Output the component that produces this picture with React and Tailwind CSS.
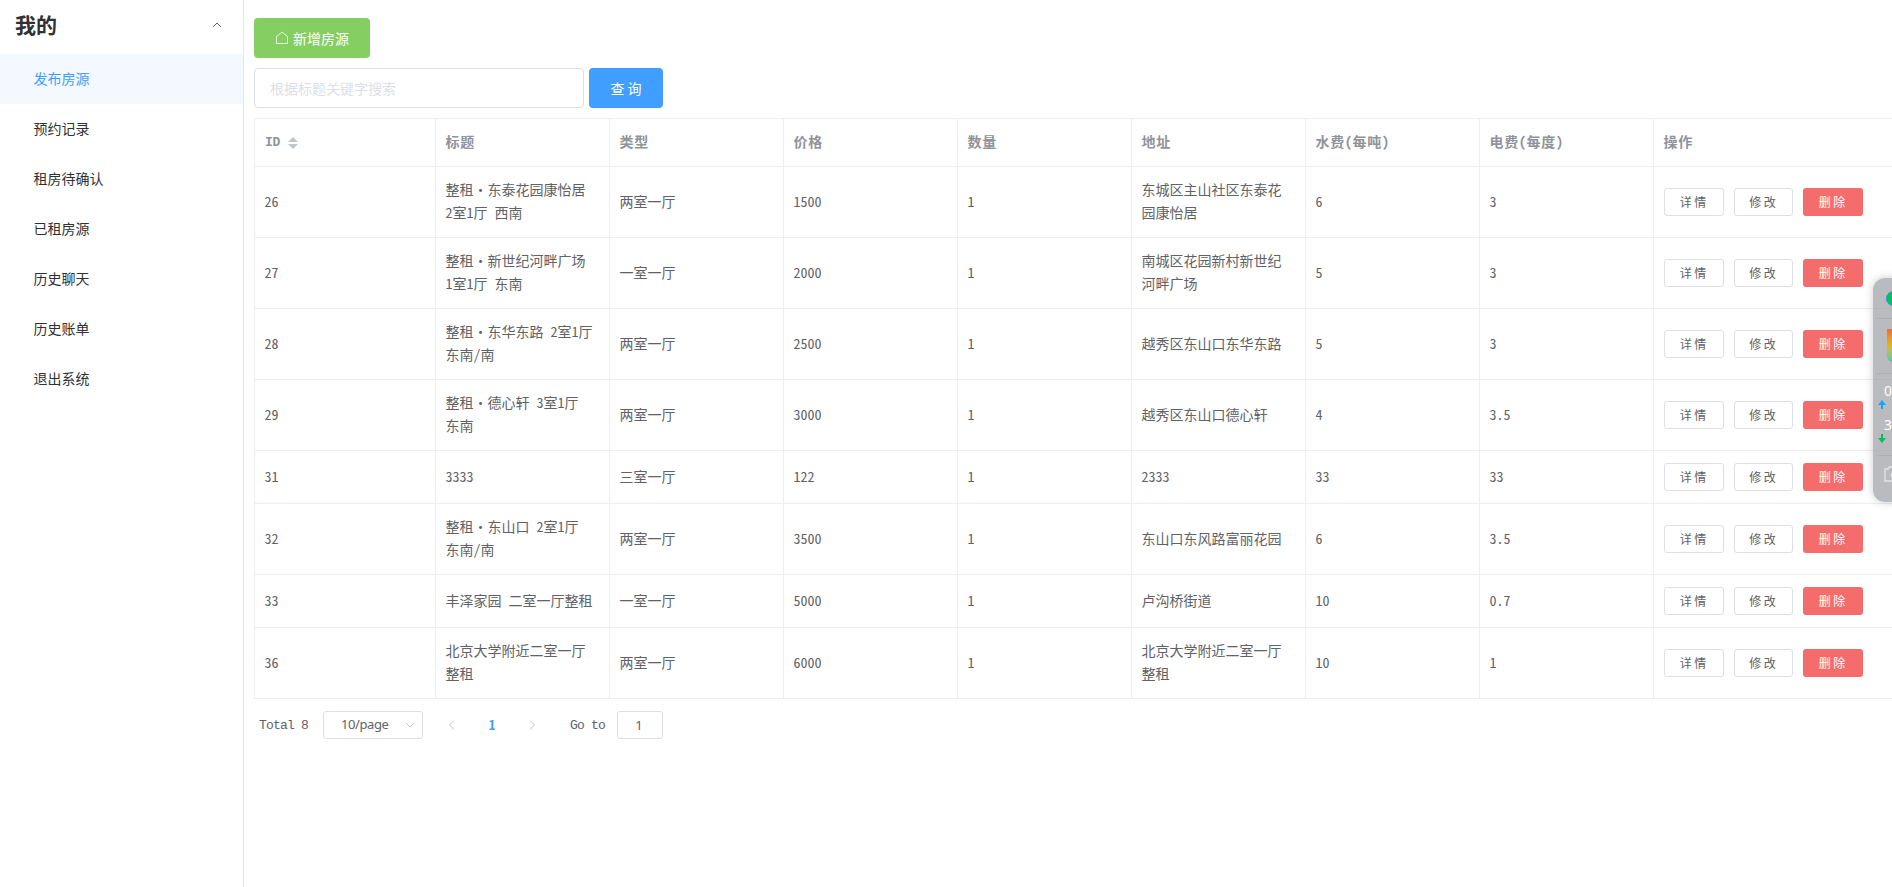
import React, { useState } from "react";

const menuItems = ["发布房源", "预约记录", "租房待确认", "已租房源", "历史聊天", "历史账单", "退出系统"];

const columns = ["标题", "类型", "价格", "数量", "地址", "水费(每吨)", "电费(每度)", "操作"];

const houses = [
  { id: 26, title: "整租·东泰花园康怡居 2室1厅 西南", type: "两室一厅", price: 1500, count: 1, address: "东城区主山社区东泰花园康怡居", water: 6, power: 3 },
  { id: 27, title: "整租·新世纪河畔广场 1室1厅 东南", type: "一室一厅", price: 2000, count: 1, address: "南城区花园新村新世纪河畔广场", water: 5, power: 3 },
  { id: 28, title: "整租·东华东路 2室1厅 东南/南", type: "两室一厅", price: 2500, count: 1, address: "越秀区东山口东华东路", water: 5, power: 3 },
  { id: 29, title: "整租·德心轩 3室1厅 东南", type: "两室一厅", price: 3000, count: 1, address: "越秀区东山口德心轩", water: 4, power: 3.5 },
  { id: 31, title: "3333", type: "三室一厅", price: 122, count: 1, address: "2333", water: 33, power: 33 },
  { id: 32, title: "整租·东山口 2室1厅 东南/南", type: "两室一厅", price: 3500, count: 1, address: "东山口东风路富丽花园", water: 6, power: 3.5 },
  { id: 33, title: "丰泽家园 二室一厅整租", type: "一室一厅", price: 5000, count: 1, address: "卢沟桥街道", water: 10, power: 0.7 },
  { id: 36, title: "北京大学附近二室一厅整租", type: "两室一厅", price: 6000, count: 1, address: "北京大学附近二室一厅整租", water: 10, power: 1 },
];

const Chevron = ({ className, d }) => (
  <svg viewBox="0 0 12 12" className={className} fill="none" stroke="currentColor">
    <path d={d} />
  </svg>
);

const Sidebar = () => {
  const [active, setActive] = useState(0);

  return (
    <aside className="w-[244px] shrink-0 border-r border-[#e6e6e6]">
      <div className="flex h-[54px] items-center justify-between pl-[15px] pr-5 pb-[5px] text-[#303133]">
        <h2 className="text-[21px] font-bold">我的</h2>
        <Chevron className="h-3 w-3 text-[#606266]" d="M2 8l4-4 4 4" />
      </div>
      <ul>
        {menuItems.map((item, index) => (
          <li
            key={item}
            onClick={() => setActive(index)}
            className={`h-[50px] cursor-pointer pl-[33.5px] text-sm leading-[48px] ${
              active === index ? "bg-[#f3f9ff] text-[#409eff]" : "text-[#303133]"
            }`}
          >
            {item}
          </li>
        ))}
      </ul>
    </aside>
  );
};

const HouseTable = () => (
  <table className="w-[1660px] table-fixed border-separate border-spacing-0 border-l border-t border-[#ebeef5] text-sm leading-[23px] text-[#606266]">
    <colgroup>
      <col className="w-[181px]" />
      {columns.slice(0, 7).map((name) => (
        <col key={name} className="w-[174px]" />
      ))}
      <col />
    </colgroup>
    <thead>
      <tr className="text-left text-[#909399]">
        <th className="border-b border-r border-[#ebeef5] px-2.5 py-3 font-bold">
          <div className="flex h-[23px] items-center gap-2">
            <span className="font-['Liberation_Mono'] text-[13px] tracking-[-0.3px]">ID</span>
            <svg viewBox="0 0 10 12" className="mt-px h-3 w-2.5 fill-[#c0c4cc]">
              <path d="M5 0l5 5H0zM5 12l5-5H0z" />
            </svg>
          </div>
        </th>
        {columns.map((name) => (
          <th key={name} className="border-b border-r border-[#ebeef5] pl-[9.5px] pr-2.5 pb-[13px] pt-[11px] font-bold tracking-[0.7px]">
            {name}
          </th>
        ))}
      </tr>
    </thead>
    <tbody>
      {houses.map((house) => (
        <tr key={house.id}>
          {Object.entries(house).map(([key, value]) => (
            <td key={key} className="border-b border-r border-[#ebeef5] pl-[9.5px] pr-2.5 pb-[13px] pt-[11px]">
              {value}
            </td>
          ))}
          <td className="border-b border-r border-[#ebeef5] px-2.5 py-3">
            <div className="flex gap-2.5 text-xs [font-feature-settings:normal]">
              <button className="h-7 w-[60px] rounded-[3px] border border-[#dcdfe6] bg-white pr-0.5">详 情</button>
              <button className="h-7 w-[59px] rounded-[3px] border border-[#dcdfe6] bg-white pr-0.5">修 改</button>
              <button className="h-7 w-[60px] rounded-[3px] bg-[#f56c6c] pr-0.5 text-white">删 除</button>
            </div>
          </td>
        </tr>
      ))}
    </tbody>
  </table>
);

const Pagination = () => (
  <div className="mt-3 flex h-7 items-center pl-[5px] text-[13px] text-[#606266]">
    <span className="w-[64px] pt-0.5 font-['Liberation_Mono'] tracking-[-0.8px]">Total 8</span>
    <button className="flex h-7 w-[100px] items-center justify-between rounded-[3px] border border-[#dcdfe6] pl-[17px] pr-[6px]">
      <span className="font-['Noto_Sans'] text-[13px] tracking-[-0.4px]">10/page</span>
      <Chevron className="h-3 w-3 text-[#c0c4cc]" d="M2 4l4 4 4-4" />
    </button>
    <Chevron className="ml-[23px] h-3 w-3 text-[#c0c4cc]" d="M8 1.500L3.500 6 8 10.500" />
    <span className="w-[68px] text-center font-bold text-[#409eff]">1</span>
    <Chevron className="h-3 w-3 text-[#c0c4cc]" d="M4 1.500L8.500 6 4 10.500" />
    <span className="ml-[32px] w-[47px] pt-0.5 font-['Liberation_Mono'] tracking-[-0.8px]">Go to</span>
    <span className="h-7 w-[46px] rounded-[3px] border border-[#dcdfe6] pr-0.5 text-center font-['Noto_Sans'] leading-[27px]">1</span>
  </div>
);

// Network speed widget docked to the right edge of the screen
const SpeedWidget = () => (
  <div className="absolute left-[1873px] top-[278px] h-[224px] w-[60px] rounded-[12px] bg-[#9c9ea2]/70 font-['Noto_Sans'] text-sm leading-[18px] text-white shadow-[0_0_10px_rgba(0,0,0,0.2)]">
    <div className="ml-1 flex h-[41px] items-center border-b border-[#adafb3] pl-[9px]">
      <span className="h-[15px] w-[15px] rounded-full border border-[#3b8fd0] bg-[#00c060]" />
    </div>
    <div className="ml-1 h-[55px] border-b border-[#adafb3] pl-[10px] pt-[10px]">
      <div className="h-[33px] w-5 rounded-bl-md bg-linear-to-b from-[#f06a30] via-[#d8b820] to-[#3cc8a8]" />
    </div>
    <div className="ml-1 h-[82px] border-b border-[#adafb3] pt-[8px]">
      <div className="pl-[7px]">0</div>
      <svg viewBox="0 0 8 9" className="ml-px h-[9px] w-2 fill-[#10a8ff]">
        <path d="M4 0l4 5H5v4H3V5H0z" />
      </svg>
      <div className="mt-[7px] pl-[7px]">3</div>
      <svg viewBox="0 0 8 9" className="ml-px h-[9px] w-2 fill-[#00c060]">
        <path d="M4 9l4-5H5V0H3v4H0z" />
      </svg>
    </div>
    <svg viewBox="0 0 20 16" className="ml-[11px] mt-[10px] h-4 w-5 fill-none stroke-[#e3e4e6]" strokeWidth="1.300">
      <path d="M4 3L5.500 1h9L16 3h3v12H1V3z" />
      <circle cx="10" cy="9" r="2.500" />
    </svg>
  </div>
);

export default function App() {
  return (
    <div className="relative flex h-[887px] w-[1892px] overflow-hidden bg-white font-['Noto_Sans_CJK_SC',sans-serif] [font-feature-settings:'hwid']">
      <Sidebar />
      <main className="min-w-0 flex-1 pl-2.5 pt-[18px]">
        <button className="flex h-10 w-[116px] items-center rounded bg-[#85ce61] pl-[21px] text-sm text-white">
          <svg viewBox="0 0 14 14" className="mr-1 h-3.5 w-3.5 fill-none stroke-white/80">
            <path d="M1.500 12.500V5.500L7 1l5.500 4.500v7z" />
          </svg>
          新增房源
        </button>
        <div className="my-2.5 flex gap-[5px]">
          <input
            className="h-10 w-[330px] rounded border border-[#dcdfe6] px-[15px] text-sm placeholder:text-[#dcdfe6]"
            placeholder="根据标题关键字搜索"
          />
          <button className="h-10 w-[74px] rounded bg-[#409eff] text-sm text-white [font-feature-settings:normal]">查 询</button>
        </div>
        <HouseTable />
        <Pagination />
      </main>
      <SpeedWidget />
    </div>
  );
}
